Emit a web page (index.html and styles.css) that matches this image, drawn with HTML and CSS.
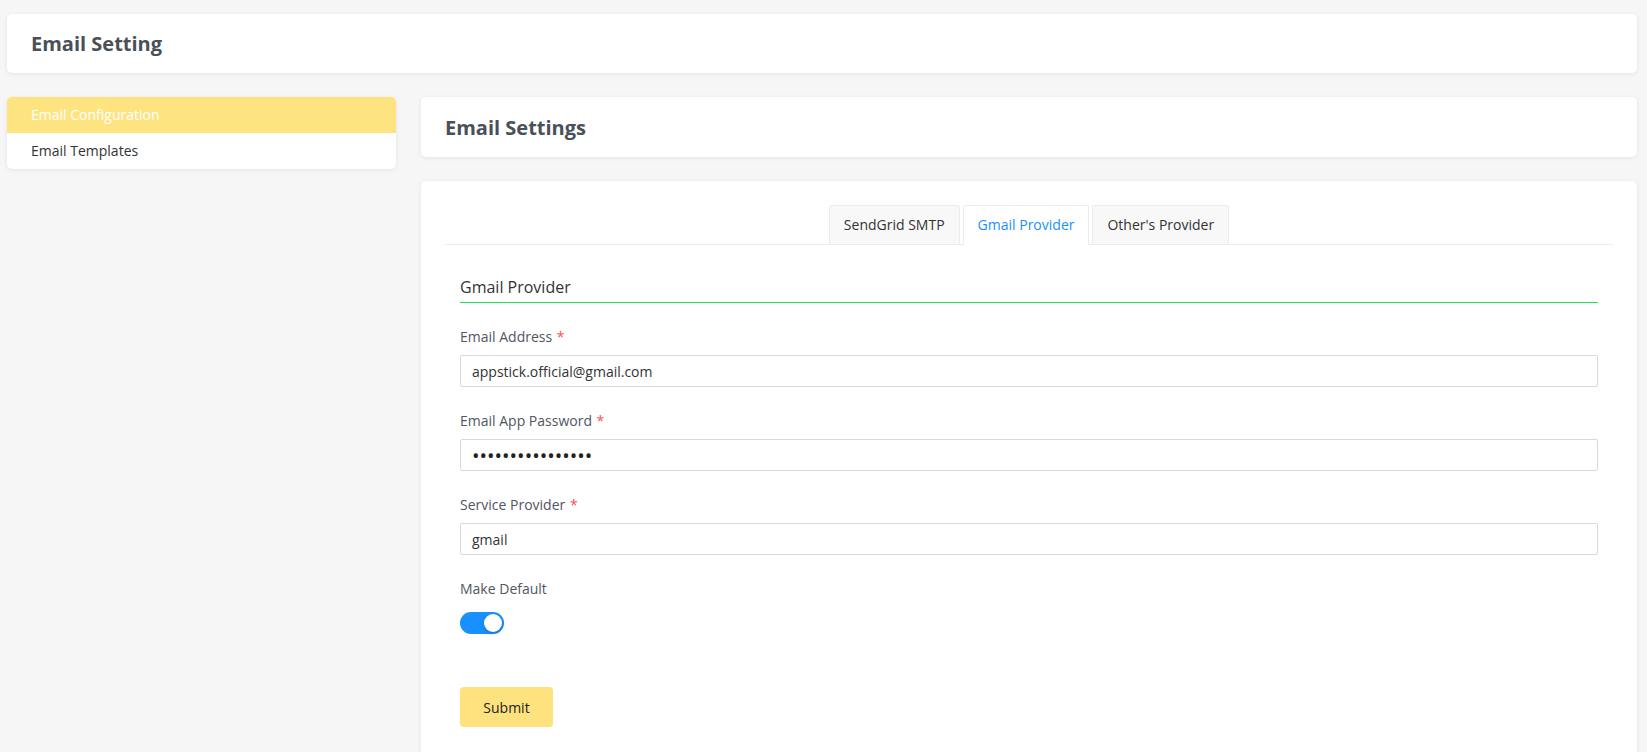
FILE: index.html
```html
<!DOCTYPE html>
<html lang="en">
<head>
<meta charset="utf-8">
<title>Email Setting</title>
<link rel="stylesheet" href="styles.css">
</head>
<body>
<div class="page">
  <div class="card title-card">
    <h1 class="title">Email Setting</h1>
  </div>
  <div class="layout">
    <aside class="card sidebar">
      <a class="side-item active">Email Configuration</a>
      <a class="side-item">Email Templates</a>
    </aside>
    <main class="content">
      <div class="card title-card sub">
        <h2 class="title">Email Settings</h2>
      </div>
      <div class="card main-card">
        <div class="tabs">
          <div class="tab">SendGrid SMTP</div>
          <div class="tab active">Gmail Provider</div>
          <div class="tab">Other's Provider</div>
        </div>
        <form class="form">
          <h3 class="section-title">Gmail Provider</h3>
          <div class="field">
            <label class="label">Email Address <span class="req">*</span></label>
            <input class="input" type="text" value="appstick.official@gmail.com">
          </div>
          <div class="field">
            <label class="label">Email App Password <span class="req">*</span></label>
            <input class="input pw" type="password" value="abcdefghijklmnop">
          </div>
          <div class="field">
            <label class="label">Service Provider <span class="req">*</span></label>
            <input class="input" type="text" value="gmail">
          </div>
          <div class="field">
            <label class="label">Make Default</label>
            <div class="switch-row">
              <span class="switch"><span class="knob"></span></span>
            </div>
          </div>
          <button class="submit" type="button">Submit</button>
        </form>
      </div>
    </main>
  </div>
</div>
</body>
</html>
```
FILE: styles.css
```css
* { box-sizing: border-box; }
html, body { margin: 0; padding: 0; }
body {
  background: #f6f6f6;
  font-family: "Open Sans", "Noto Sans", sans-serif;
  font-size: 14px;
  color: #333;
  height: 752px;
  overflow: hidden;
}
.page {
  padding: 14px 10px 0 7px;
}
.card {
  background: #fff;
  border-radius: 5px;
  box-shadow: 0 1px 4px rgba(0, 0, 0, 0.08);
}
.title-card {
  height: 59px;
  display: flex;
  align-items: center;
  padding: 0 24px;
}
.title-card.sub { height: 60px; }
.title {
  margin: 0;
  font-size: 20px;
  font-weight: 700;
  color: #495057;
}
.layout {
  margin-top: 24px;
  display: grid;
  grid-template-columns: 389px 1fr;
  column-gap: 25px;
  align-items: start;
}
.sidebar {
  display: flex;
  flex-direction: column;
  overflow: hidden;
}
.side-item {
  height: 36px;
  line-height: 36px;
  padding: 0 24px;
  font-size: 14px;
  color: #333;
}
.side-item.active {
  background: #fee480;
  color: #fff;
}
.content {
  display: flex;
  flex-direction: column;
  gap: 24px;
}
.main-card {
  padding: 24px 24px 60px;
}
.tabs {
  display: flex;
  justify-content: center;
  gap: 3px;
  border-bottom: 1px solid #ececec;
}
.tab {
  height: 39px;
  line-height: 38px;
  padding: 0 14px;
  border: 1px solid #ececec;
  border-bottom: none;
  border-radius: 2px 2px 0 0;
  background: #f8f8f8;
  color: #333;
  font-size: 14px;
  margin-bottom: -1px;
}
.tab.active {
  background: #fff;
  color: #1890ff;
  height: 40px;
}
.form {
  padding: 0 15px;
}
.section-title {
  margin: 30px 0 0;
  padding-bottom: 3px;
  font-size: 16px;
  font-weight: 400;
  line-height: 24px;
  color: #333;
  border-bottom: 1px solid #22e55c;
}
.field {
  margin-top: 23px;
}
.label {
  display: block;
  line-height: 21px;
  font-size: 14px;
  color: #505662;
  margin-bottom: 8px;
}
.req {
  color: #ff4d4f;
  margin-left: 1px;
}
.input {
  display: block;
  width: 100%;
  height: 32px;
  padding: 0 11px;
  border: 1px solid #d9d9d9;
  border-radius: 2px;
  font-family: inherit;
  font-size: 14px;
  color: #333;
  background: #fff;
  outline: none;
}
.input.pw {
  font-size: 20px;
  color: #222;
}
.switch-row {
  padding-top: 5px;
}
.switch {
  position: relative;
  display: inline-block;
  width: 44px;
  height: 22px;
  border-radius: 11px;
  background: #1890ff;
  vertical-align: top;
}
.knob {
  position: absolute;
  top: 2px;
  right: 2px;
  width: 18px;
  height: 18px;
  border-radius: 50%;
  background: #fff;
  box-shadow: 0 2px 4px rgba(0, 35, 11, 0.2);
}
.submit {
  display: block;
  margin-top: 53px;
  width: 93px;
  height: 40px;
  border: none;
  border-radius: 4px;
  background: #fee27e;
  color: #222;
  font-family: inherit;
  font-size: 14px;
  cursor: pointer;
}
```
